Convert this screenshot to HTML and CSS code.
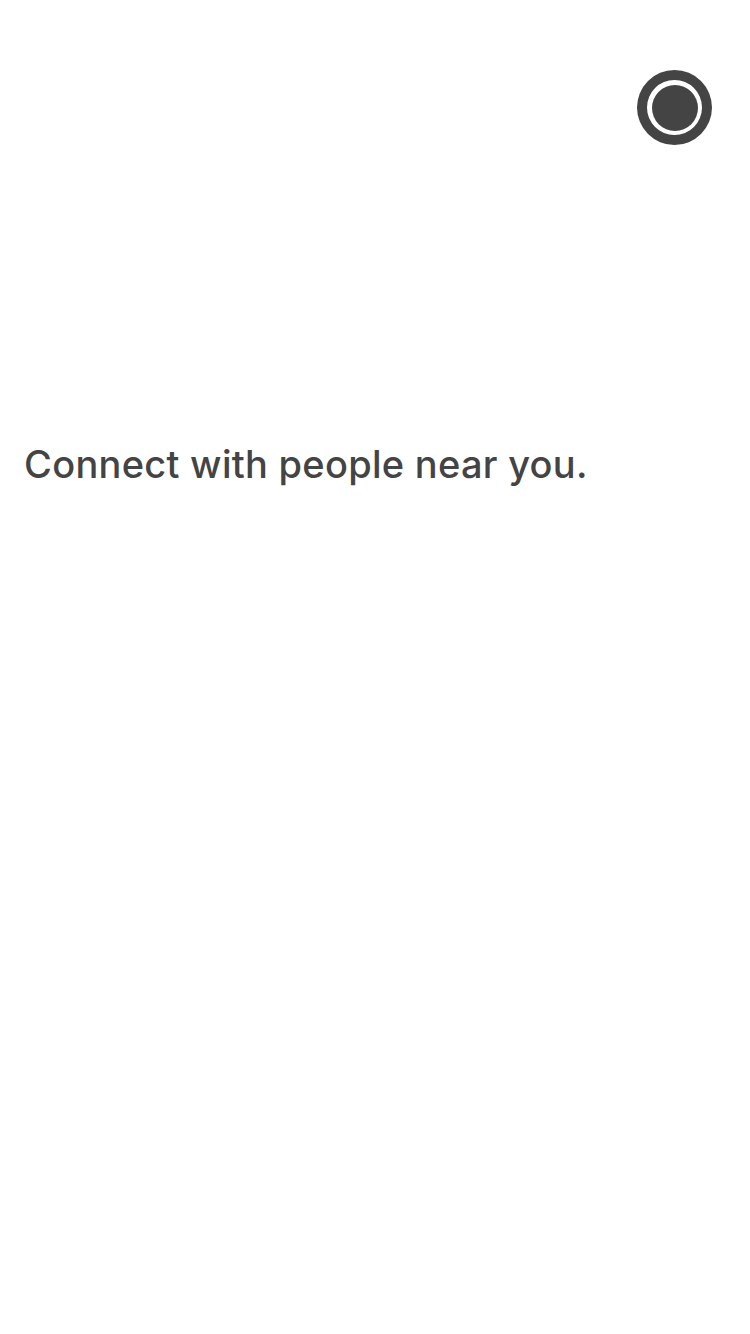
FILE: index.html
```html
<!DOCTYPE html>
<html>
<head>
<meta charset="utf-8">
<link rel="stylesheet" href="styles.css">
</head>
<body>
<div class="screen">
  <div class="top">
    <div class="record" aria-label="record">
      <div class="ring"><div class="dot"></div></div>
    </div>
  </div>
  <p class="tagline">Connect with people near you.</p>
</div>
</body>
</html>
```
FILE: styles.css
```css
html, body {
  margin: 0;
  padding: 0;
  background: #ffffff;
}
.screen {
  width: 750px;
  height: 1334px;
  display: flex;
  flex-direction: column;
  font-family: Inter, Roboto, "Liberation Sans", sans-serif;
}
.top {
  display: flex;
  justify-content: flex-end;
  padding: 70px 38px 0 0;
}
.record {
  width: 75px;
  height: 75px;
  border-radius: 50%;
  background: #444444;
  display: flex;
  align-items: center;
  justify-content: center;
}
.ring {
  width: 55px;
  height: 55px;
  border-radius: 50%;
  background: #ffffff;
  display: flex;
  align-items: center;
  justify-content: center;
}
.dot {
  width: 46px;
  height: 46px;
  border-radius: 50%;
  background: #444444;
}
.tagline {
  margin: 297px 0 0 24px;
  font-size: 38px;
  font-weight: 500;
  letter-spacing: 0.28px;
  line-height: 44px;
  color: #444444;
}
```
